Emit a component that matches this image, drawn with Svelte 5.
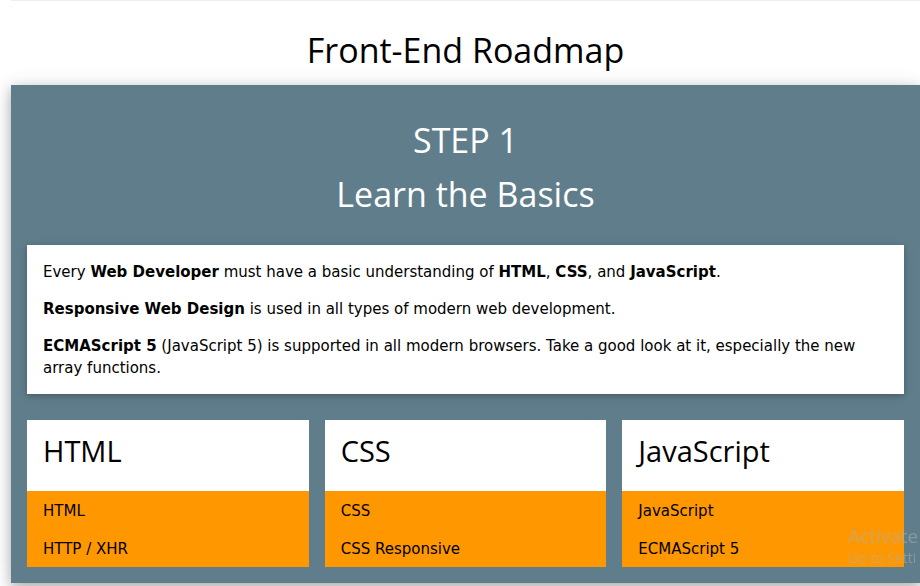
<script>
  const cards = [
    { title: 'HTML', topics: ['HTML', 'HTTP / XHR'] },
    { title: 'CSS', topics: ['CSS', 'CSS Responsive'] },
    { title: 'JavaScript', topics: ['JavaScript', 'ECMAScript 5'] }
  ];
</script>

<main>
  <hr />
  <h1>Front-End Roadmap</h1>
  <section class="step">
    <header>
      <h2>STEP 1</h2>
      <h2>Learn the Basics</h2>
    </header>
    <div class="intro">
      <p>Every <b>Web Developer</b> must have a basic understanding of <b>HTML</b>, <b>CSS</b>, and <b>JavaScript</b>.</p>
      <p><b>Responsive Web Design</b> is used in all types of modern web development.</p>
      <p><b>ECMAScript 5</b> (JavaScript 5) is supported in all modern browsers. Take a good look at it, especially the new array functions.</p>
    </div>
    <div class="cards">
      {#each cards as card}
        <article>
          <h3>{card.title}</h3>
          <ul>
            {#each card.topics as topic}
              <li>{topic}</li>
            {/each}
          </ul>
        </article>
      {/each}
    </div>
  </section>
</main>
<aside class="notice">
  <div class="notice-title">Activate</div>
  <div>Go to Setti</div>
</aside>

<style>
  :global(body) {
    background: #fff;
    overflow: hidden;
  }
  main {
    padding: 0 0 32px 11px;
    color: #000;
    font: 15px/22px Verdana, "DejaVu Sans", sans-serif;
  }
  hr {
    height: 1px;
    margin: 0 0 22px;
    border: 0;
    background: #eee;
  }
  h1, h2, h3 {
    margin: 0;
    font-family: "Segoe UI", "Open Sans", sans-serif;
    font-weight: 400;
  }
  h1, h2 {
    font-size: 34px;
    line-height: 54px;
    text-align: center;
  }
  h1 {
    margin-bottom: 8px;
  }
  .step {
    padding: 28px 16px 16px;
    background: #607d8b;
    box-shadow: 0 4px 10px rgba(0, 0, 0, 0.2), 0 4px 20px rgba(0, 0, 0, 0.19);
  }
  header {
    margin-bottom: 24px;
    color: #fff;
  }
  .intro {
    display: flex;
    flex-direction: column;
    gap: 15px;
    padding: 16px 16px 15px;
    background: #fff;
    box-shadow: 0 2px 5px rgba(0, 0, 0, 0.16), 0 2px 10px rgba(0, 0, 0, 0.12);
  }
  p {
    margin: 0;
  }
  .cards {
    display: grid;
    grid-template-columns: repeat(3, 1fr);
    gap: 16px;
    margin-top: 26px;
  }
  article {
    background: #fff;
  }
  h3 {
    padding: 8px 16px 18px;
    font-size: 29px;
    line-height: 45px;
  }
  ul {
    margin: 0;
    padding: 0;
    list-style: none;
    background: #ff9800;
  }
  li {
    padding: 9px 16px 7px;
  }
  .notice {
    position: fixed;
    right: 0;
    bottom: 18px;
    width: 72px;
    overflow: hidden;
    white-space: nowrap;
    color: rgba(165, 175, 175, 0.55);
    font: 14px/20px "Segoe UI", "Open Sans", sans-serif;
    pointer-events: none;
  }
  .notice-title {
    font-size: 19px;
    line-height: 24px;
  }
</style>
